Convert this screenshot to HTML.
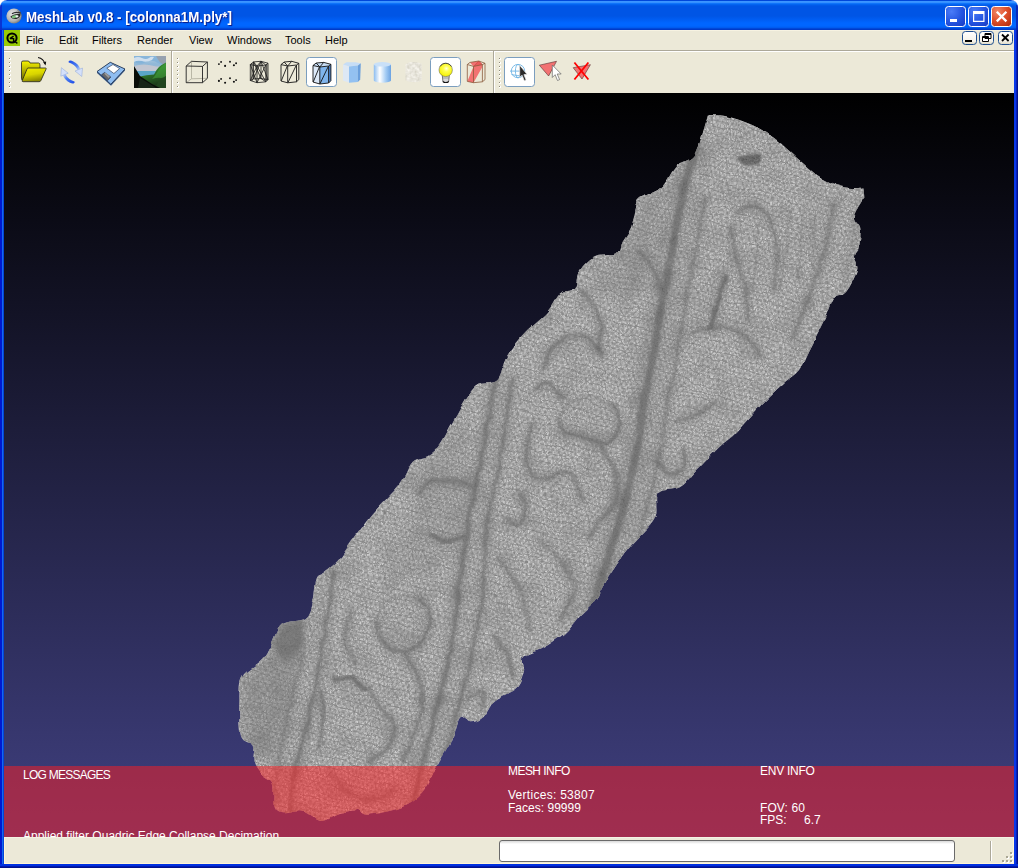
<!DOCTYPE html>
<html><head><meta charset="utf-8"><title>MeshLab v0.8 - [colonna1M.ply*]</title>
<style>
html,body{margin:0;padding:0;}
body{width:1018px;height:868px;overflow:hidden;position:relative;background:#fff;font-family:"Liberation Sans",sans-serif;}
#win{position:absolute;left:0;top:0;width:1018px;height:868px;overflow:hidden;background:#0b45e0;border-radius:7px 7px 0 0;}
#corners{position:absolute;left:0;top:0;width:1018px;height:8px;background:#fff;}
#title{position:absolute;left:0;top:0;width:1018px;height:30px;border-radius:7px 7px 0 0;
background:linear-gradient(to bottom,#0047da 0,#0047da 1px,#3b95ff 1.5px,#3590ff 2.5px,#0f74fa 3.5px,#0364f0 4.5px,#0055e5 6px,#0055e5 16px,#005cf0 19px,#0066ff 23px,#0066ff 26px,#005cf0 27.5px,#0048d8 28.5px,#0033c0 30px);}
#title .txt{position:absolute;left:26px;top:9px;transform:scaleX(0.952);transform-origin:0 0;font-size:14px;font-weight:bold;color:#fff;white-space:nowrap;line-height:16px;text-shadow:1px 1px 1px #0a1883;}
#bl{position:absolute;left:0;top:30px;width:4px;height:838px;background:linear-gradient(to right,#0019cf 0,#0019cf 2px,#1468f0 2px,#1468f0 3px,#0444d8 3px);}
#br{position:absolute;left:1014px;top:30px;width:4px;height:838px;background:linear-gradient(to right,#0838e8 0,#0838e8 2px,#0820b8 2px,#0820b8 3px,#00108c 3px);}
#bb{position:absolute;left:0;top:864px;width:1018px;height:4px;background:linear-gradient(to bottom,#0030e0 0,#0030e0 2px,#0018b0 2px,#0018b0 3px,#00108c 3px);}
#menu{position:absolute;left:4px;top:30px;width:1010px;height:20px;background:#ece9d8;box-shadow:inset 0 1px 0 #f7f3e2;font-size:11px;color:#000;}
#menu span{position:absolute;top:4px;line-height:13px;white-space:nowrap;}
#tb{position:absolute;left:4px;top:50px;width:1010px;height:43px;background:#ece9d8;border-top:1px solid #aca899;box-sizing:border-box;}
#tb:before{content:"";position:absolute;left:0;top:0;width:100%;height:1px;background:#fff;}
#gl{position:absolute;left:4px;top:93px;width:1010px;height:744px;background:linear-gradient(to bottom,#000 0,#404080 100%);overflow:hidden;}
#log{position:absolute;left:0;top:673px;width:1010px;height:71px;background:rgba(255,28,32,0.5);}
.gt{position:absolute;color:#fff;font-size:12px;line-height:14px;white-space:pre;}
#sb{position:absolute;left:4px;top:837px;width:1010px;height:27px;background:#ece9d8;box-sizing:border-box;border-left:1px solid #fff5d6;border-right:1px solid #fff5d6;border-bottom:1px solid #fff5d6;border-top:1px solid #f3f3e4;}
#sb .box{position:absolute;left:494px;top:2px;width:454px;height:20px;border:1px solid #6a6a6a;border-radius:3px;background:linear-gradient(to bottom,#d8d8d8 0,#fff 3px);}
#sb .sep{position:absolute;left:985px;top:3px;width:1px;height:20px;background:#aca899;border-right:1px solid #fff;}
#sb .grip{position:absolute;left:0;top:0;}
</style></head><body>
<div id="win">
<div id="corners"></div>
<div id="title"><span class="txt">MeshLab v0.8 - [colonna1M.ply*]</span></div>
<div id="menu">
<span style="left:22px">File</span><span style="left:55px">Edit</span><span style="left:88px">Filters</span><span style="left:133px">Render</span><span style="left:185px">View</span><span style="left:223px">Windows</span><span style="left:281px">Tools</span><span style="left:321px">Help</span>
</div>
<div id="tb"></div>
<div id="gl">
<svg id="mesh" width="1010" height="744" viewBox="0 0 1010 744" style="position:absolute;left:0;top:0">
<defs><clipPath id="mclip"><path d="M703.8,22.7 C703.8,22.7 712.7,21.4 719.5,22.7 C726.3,24 736.3,26.9 744.7,30.6 C753.1,34.3 761.4,38.7 769.8,44.7 C778.2,50.7 787.6,60.4 795,66.7 C802.4,73 807.6,78.3 813.9,82.5 C820.2,86.7 826.9,89.8 832.7,91.9 C838.5,94 844,94.6 848.5,95 C853,95.4 859.5,94.4 859.5,94.4 C859.5,94.4 860.4,104.5 860.4,104.5 C860.4,104.5 850.7,118.2 850,123.4 C849.3,128.6 855.5,130.7 856.3,135.9 C857.1,141.1 855.8,150.1 854.7,154.8 C853.7,159.5 850.2,160.5 850,164.2 C849.8,167.9 854.5,171 853.2,176.8 C851.9,182.6 846.1,194.1 842.2,198.8 C838.3,203.5 833.3,200.4 829.6,205.1 C825.9,209.8 824.4,218.1 820.2,227 C816,235.9 808.6,250.3 804.4,258.6 C800.2,266.9 798.9,271.9 795,277 C791.1,282.1 786,284.5 781,289 C776,293.5 770.7,298.3 765,304 C759.3,309.7 752.8,316.7 747,323 C741.2,329.3 735.2,336.6 730,341.7 C724.8,346.8 722.4,347.3 716,353.4 C709.6,359.5 698.3,371.7 691.6,378.5 C684.9,385.3 682.2,390.5 675.9,394.2 C669.6,397.9 658.1,395.2 653.9,400.5 C649.7,405.8 654.9,417.3 650.7,425.7 C646.5,434.1 634.5,443.9 628.7,450.8 C622.9,457.7 620.6,460.5 616,467 C611.4,473.5 605.2,483 601,489.8 C596.8,496.6 595,502.1 590.8,507.6 C586.6,513.1 580.2,517.7 575.6,522.8 C571,527.9 567.1,533.8 562.9,538 C558.7,542.2 554.4,545 550.2,548 C546,551 542.6,553 537.6,555.7 C532.6,558.4 522.9,560.3 520,564 C517.1,567.7 521.1,573 520,578 C518.9,583 516.9,589.7 513.5,593.8 C510.1,597.9 503.5,600.1 499.5,602.6 C495.5,605.1 492.8,605.4 489.4,609 C486,612.6 483,620.8 479.2,624.2 C475.4,627.6 470.4,629.3 466.6,629.3 C462.8,629.3 459.4,621.7 456.4,624.2 C453.4,626.7 452.6,636.6 448.8,644.5 C445,652.4 437.1,664.8 433.5,671.4 C429.9,678 429.9,679.3 427.3,684 C424.7,688.7 422,695 417.8,699.7 C413.6,704.4 407.9,709.1 402.1,712.3 C396.3,715.4 389.8,717 383.2,718.6 C376.6,720.2 367.8,722 362.8,721.7 C357.8,721.4 355.4,717.5 353,717 C350.6,716.5 352,717.8 348.6,718.6 C345.2,719.4 338.1,720.1 332.9,721.7 C327.7,723.3 323,728.5 317.2,728 C311.4,727.5 304.9,719.9 298.3,718.6 C291.8,717.3 282.6,721.2 277.9,720.2 C273.2,719.2 271.6,717.3 270,712.3 C268.4,707.3 270.6,695.5 268.5,690.3 C266.4,685 260.5,684.5 257.4,680.8 C254.2,677.1 250.9,673 249.6,668.3 C248.3,663.6 251.7,656.7 249.6,652.5 C247.5,648.3 239.4,650.9 237,643 C234.6,635.1 235.1,615.3 235.4,605.4 C235.7,595.5 234.9,589.7 238.6,583.4 C242.3,577.1 252.7,572.9 257.4,567.6 C262.1,562.4 263.5,557.9 266.9,551.9 C270.3,545.9 272.1,536 277.9,531.5 C283.7,527 296.3,529.1 301.5,525.2 C306.7,521.3 307.5,514.5 309.3,507.9 C311.1,501.3 310.7,490.6 312.5,485.9 C314.3,481.2 316.6,482.8 320.3,479.6 C324,476.5 330.3,471.6 334.5,467 C338.7,462.4 339.6,459.7 345.3,452 C351,444.3 360.4,430.8 368.9,420.6 C377.3,410.4 389.4,399.6 396,391 C402.6,382.4 403.9,373.7 408.6,369 C413.3,364.3 419.6,365.9 424.3,362.8 C429,359.7 432.2,357 436.9,350.2 C441.6,343.4 446.8,331.3 452.6,321.9 C458.4,312.5 464.7,299.4 471.5,293.6 C478.3,287.8 488.3,292.5 493.5,287.3 C498.7,282.1 498.2,270.3 502.9,262.2 C507.6,254.1 515.1,245.8 521.8,238.6 C528.5,231.4 537.3,225.4 543,219 C548.7,212.6 551.5,204.3 556,200.4 C560.5,196.5 567.1,199.1 570.2,195.7 C573.4,192.3 571.5,185.2 574.9,180 C578.3,174.8 584.3,167.3 590.6,164.2 C596.9,161 607.9,163.7 612.6,161.1 C617.3,158.5 616.5,152.7 618.9,148.5 C621.3,144.3 625,140.1 626.8,135.9 C628.6,131.7 628.6,128.1 629.9,123.4 C631.2,118.7 631.7,111.5 634.6,107.6 C637.5,103.7 643,102.4 647.2,99.8 C651.4,97.2 655.6,96.4 659.8,91.9 C664,87.4 667.7,77.5 672.4,73 C677.1,68.5 684.3,68.3 688,65.2 C691.7,62.1 691.8,61.3 694.4,54.2 C697,47.1 703.8,22.7 703.8,22.7Z"/></clipPath>
<filter id="b1" x="-20%" y="-20%" width="140%" height="140%"><feGaussianBlur stdDeviation="1.2"/></filter>
<filter id="b3" x="-20%" y="-20%" width="140%" height="140%"><feGaussianBlur stdDeviation="3"/></filter>
<filter id="b6" x="-20%" y="-20%" width="140%" height="140%"><feGaussianBlur stdDeviation="6"/></filter>
<filter id="nz" x="0" y="0" width="100%" height="100%"><feTurbulence type="fractalNoise" baseFrequency="0.55" numOctaves="2" seed="7" result="n"/><feColorMatrix type="matrix" values="0 0 0 0 0  0 0 0 0 0  0 0 0 0 0  2.2 0 0 0 -0.85"/></filter>
<filter id="nz2" x="0" y="0" width="100%" height="100%"><feTurbulence type="fractalNoise" baseFrequency="0.045" numOctaves="3" seed="3" result="n"/><feColorMatrix type="matrix" values="0 0 0 0 0  0 0 0 0 0  0 0 0 0 0  0 2.4 0 0 -1.0"/></filter>
<filter id="nz3" x="0" y="0" width="100%" height="100%"><feTurbulence type="fractalNoise" baseFrequency="0.05" numOctaves="3" seed="11" result="n"/><feColorMatrix type="matrix" values="0 0 0 0 1  0 0 0 0 1  0 0 0 0 1  0 2.0 0 0 -0.95"/></filter>
<pattern id="wire" width="5" height="8.66" patternUnits="userSpaceOnUse" patternTransform="rotate(17)"><path d="M0,0H5M0,4.330H5M0,8.660H5M0,0L2.500,4.330L5,0M0,8.660L2.500,4.330L5,8.660" fill="none" stroke="#7a7a7a" stroke-width="0.9"/></pattern>
<pattern id="wire2" width="7" height="12.12" patternUnits="userSpaceOnUse" patternTransform="rotate(71)"><path d="M0,0H7M0,6.060H7M0,12.120H7M0,0L3.500,6.060L7,0M0,12.120L3.500,6.060L7,12.120" fill="none" stroke="#808080" stroke-width="0.9"/></pattern>
<filter id="disp" x="0" y="0" width="100%" height="100%"><feTurbulence type="fractalNoise" baseFrequency="0.035" numOctaves="2" seed="5" result="t"/><feDisplacementMap in="SourceGraphic" in2="t" scale="9" xChannelSelector="R" yChannelSelector="G"/></filter>
<filter id="rough" filterUnits="userSpaceOnUse" x="200" y="0" width="700" height="744"><feTurbulence type="fractalNoise" baseFrequency="0.07" numOctaves="2" seed="21" result="t"/><feDisplacementMap in="SourceGraphic" in2="t" scale="5" xChannelSelector="R" yChannelSelector="G"/></filter>
</defs>
<g filter="url(#rough)"><g clip-path="url(#mclip)">
<rect x="230" y="15" width="640" height="720" fill="#d6d6d6"/>
<path d="M240,587 C245.2,582 261.7,563.7 271,557 C280.3,550.3 292.5,542 296,547 C299.5,552 294.5,573.7 292,587 C289.5,600.3 285.3,613.7 281,627 C276.7,640.3 272.5,663.7 266,667 C259.5,670.3 246,650.3 242,647Z" fill="#8a8a8a" opacity="0.55" filter="url(#b6)"/>
<path d="M636,107 C640.2,105.3 657.7,90.3 661,97 C664.3,103.7 660.2,130.3 656,147 C651.8,163.7 643.5,187 636,197 C628.5,207 617.7,208.7 611,207 C604.3,205.3 594.3,197 596,187 C597.7,177 616.8,153.7 621,147Z" fill="#8c8c8c" opacity="0.35" filter="url(#b6)"/>
<path d="M416,377 C421,372 437.7,347 446,347 C454.3,347 466,360.3 466,377 C466,393.7 454.3,428.7 446,447 C437.7,465.3 424.3,483.7 416,487 C407.7,490.3 399.3,470.3 396,467Z" fill="#8c8c8c" opacity="0.3" filter="url(#b6)"/>
<path d="M716,37 C722.7,37.8 739.3,32.8 756,42 C772.7,51.2 801,81.2 816,92 C831,102.8 844.3,94.5 846,107 C847.7,119.5 836,158.7 826,167 C816,175.3 797.7,167 786,157 C774.3,147 766,120.3 756,107 C746,93.7 731,82 726,77Z" fill="#d0d0d0" opacity="0.35" filter="url(#b6)"/>
<path d="M693,55 C692.2,57 690.4,59.3 688,67 C685.6,74.7 681.5,88.8 678.6,101.3 C675.7,113.8 673.4,128.6 670.8,142.2 C668.2,155.8 665.6,168.9 663,183 C660.4,197.1 657.6,211.3 655,227 C652.4,242.7 649.5,264.8 647.2,277 C644.9,289.2 643.9,285.7 641.3,300 C638.7,314.3 636,341.9 631.8,362.8 C627.6,383.8 621.8,404.7 616,425.7 C610.2,446.7 601.5,474.1 597,488.6 C592.5,503.2 590.3,508.9 589,513" fill="none" stroke="#6a6a6a" stroke-width="25.6" stroke-linecap="round" opacity="0.28" filter="url(#b3)"/>
<path d="M693,55 C692.2,57 690.4,59.3 688,67 C685.6,74.7 681.5,88.8 678.6,101.3 C675.7,113.8 673.4,128.6 670.8,142.2 C668.2,155.8 665.6,168.9 663,183 C660.4,197.1 657.6,211.3 655,227 C652.4,242.7 649.5,264.8 647.2,277 C644.9,289.2 643.9,285.7 641.3,300 C638.7,314.3 636,341.9 631.8,362.8 C627.6,383.8 621.8,404.7 616,425.7 C610.2,446.7 601.5,474.1 597,488.6 C592.5,503.2 590.3,508.9 589,513" fill="none" stroke="#6a6a6a" stroke-width="8" stroke-linecap="round" opacity="0.8" filter="url(#b1)"/>
<path d="M705,57 C704.2,59 702.4,61.3 700,69 C697.6,76.7 693.5,90.8 690.6,103.3 C687.7,115.8 685.4,130.6 682.8,144.2 C680.2,157.8 677.6,170.9 675,185 C672.4,199.1 669.6,213.3 667,229 C664.4,244.7 661.5,266.8 659.2,279 C656.9,291.2 655.9,287.7 653.3,302 C650.7,316.3 648,343.9 643.8,364.8 C639.6,385.8 633.8,406.7 628,427.7 C622.2,448.7 613.5,476.1 609,490.6 C604.5,505.2 602.3,510.9 601,515" fill="none" stroke="#c6c6c6" stroke-width="11" stroke-linecap="round" opacity="0.7" filter="url(#b3)"/>
<path d="M701.6,104.3 C700.3,111.1 696.4,131.6 693.8,145.2 C691.2,158.8 688.6,171.9 686,186 C683.4,200.1 680.6,214.3 678,230 C675.4,245.7 672.5,267.8 670.2,280 C667.9,292.2 666.9,288.7 664.3,303 C661.7,317.3 659,344.9 654.8,365.8 C650.6,386.8 644.8,407.7 639,428.7 C633.2,449.7 624.5,477.1 620,491.6 C615.5,506.2 613.3,511.9 612,516" fill="none" stroke="#6a6a6a" stroke-width="8.0" stroke-linecap="round" opacity="0.28" filter="url(#b3)"/>
<path d="M701.6,104.3 C700.3,111.1 696.4,131.6 693.8,145.2 C691.2,158.8 688.6,171.9 686,186 C683.4,200.1 680.6,214.3 678,230 C675.4,245.7 672.5,267.8 670.2,280 C667.9,292.2 666.9,288.7 664.3,303 C661.7,317.3 659,344.9 654.8,365.8 C650.6,386.8 644.8,407.7 639,428.7 C633.2,449.7 624.5,477.1 620,491.6 C615.5,506.2 613.3,511.9 612,516" fill="none" stroke="#6f6f6f" stroke-width="2.5" stroke-linecap="round" opacity="0.55" filter="url(#b1)"/>
<path d="M493,291 C492.6,291.4 492.8,281.6 490.3,293.6 C487.8,305.6 482,340.8 477.8,362.8 C473.6,384.8 468.9,404.7 465.2,425.7 C461.5,446.7 458.9,466.1 455.7,488.6 C452.5,511.2 450.2,538.4 446,561 C441.8,583.6 435.6,603 430.4,624 C425.2,645 418.8,671.5 414.7,687 C410.6,702.5 407.4,712 406,717" fill="none" stroke="#6a6a6a" stroke-width="14.4" stroke-linecap="round" opacity="0.28" filter="url(#b3)"/>
<path d="M493,291 C492.6,291.4 492.8,281.6 490.3,293.6 C487.8,305.6 482,340.8 477.8,362.8 C473.6,384.8 468.9,404.7 465.2,425.7 C461.5,446.7 458.9,466.1 455.7,488.6 C452.5,511.2 450.2,538.4 446,561 C441.8,583.6 435.6,603 430.4,624 C425.2,645 418.8,671.5 414.7,687 C410.6,702.5 407.4,712 406,717" fill="none" stroke="#6f6f6f" stroke-width="4.5" stroke-linecap="round" opacity="0.75" filter="url(#b1)"/>
<path d="M508,287 C506.1,299.6 500.6,339.7 496.6,362.8 C492.6,385.9 487.1,401.7 484,425.7 C480.9,449.7 480.8,483.4 477.8,507 C474.8,530.5 470.5,547 466,567 C461.5,587 456,608.7 451,627 C446,645.3 438.5,668.7 436,677" fill="none" stroke="#6a6a6a" stroke-width="11.200000000000001" stroke-linecap="round" opacity="0.28" filter="url(#b3)"/>
<path d="M508,287 C506.1,299.6 500.6,339.7 496.6,362.8 C492.6,385.9 487.1,401.7 484,425.7 C480.9,449.7 480.8,483.4 477.8,507 C474.8,530.5 470.5,547 466,567 C461.5,587 456,608.7 451,627 C446,645.3 438.5,668.7 436,677" fill="none" stroke="#6f6f6f" stroke-width="3.5" stroke-linecap="round" opacity="0.65" filter="url(#b1)"/>
<path d="M499.1,290.3 C497.2,302.4 491.3,340.2 487.2,362.8 C483.1,385.4 478,403.2 474.6,425.7 C471.2,448.2 469.9,474.7 466.8,497.8 C463.6,520.8 460.3,542.7 456,564 C451.7,585.3 445.8,605.8 440.7,625.5 C435.6,645.2 427.9,672.6 425.4,682" fill="none" stroke="#c6c6c6" stroke-width="8" stroke-linecap="round" opacity="0.6" filter="url(#b3)"/>
<path d="M329.8,479.6 C327.7,493.2 321.2,536.9 317,561 C312.8,585.1 309.3,603 304.6,624 C299.9,645 292.1,671.2 289,687 C285.9,702.8 286.5,713.7 286,719" fill="none" stroke="#6a6a6a" stroke-width="11.200000000000001" stroke-linecap="round" opacity="0.28" filter="url(#b3)"/>
<path d="M329.8,479.6 C327.7,493.2 321.2,536.9 317,561 C312.8,585.1 309.3,603 304.6,624 C299.9,645 292.1,671.2 289,687 C285.9,702.8 286.5,713.7 286,719" fill="none" stroke="#6f6f6f" stroke-width="3.5" stroke-linecap="round" opacity="0.7" filter="url(#b1)"/>
<path d="M320.5,486 C318.1,498.5 311,538 306,561 C301,584 294.8,605.7 290.6,624 C286.4,642.3 283.1,656.3 281,671 C278.9,685.7 278.5,705.2 278,712" fill="none" stroke="#c4c4c4" stroke-width="8" stroke-linecap="round" opacity="0.6" filter="url(#b3)"/>
<path d="M299,561 C296.4,571.5 287.8,605.7 283.6,624 C279.4,642.3 276.1,656.3 274,671 C271.9,685.7 271.5,705.2 271,712" fill="none" stroke="#6a6a6a" stroke-width="8.0" stroke-linecap="round" opacity="0.28" filter="url(#b3)"/>
<path d="M299,561 C296.4,571.5 287.8,605.7 283.6,624 C279.4,642.3 276.1,656.3 274,671 C271.9,685.7 271.5,705.2 271,712" fill="none" stroke="#6f6f6f" stroke-width="2.5" stroke-linecap="round" opacity="0.5" filter="url(#b1)"/>
<path d="M275,531 C279,530.2 295.5,521.7 299,526 C302.5,530.3 299.5,550.5 296,557 C292.5,563.5 282.7,565.8 278,565 C273.3,564.2 269.7,554.2 268,552Z" fill="#6c6c6c" opacity="0.8" filter="url(#b3)"/>
<path d="M732,65 C734,64.3 739.8,61.5 744,61 C748.2,60.5 755,60.7 757,62 C759,63.3 758.7,67.2 756,69 C753.3,70.8 743.5,72.3 741,73Z" fill="#505050" opacity="0.9" filter="url(#b1)"/>
<path d="M721,183 C720,186.7 717.3,196.7 715,205 C712.7,213.3 708.3,228.3 707,233" fill="none" stroke="#6a6a6a" stroke-width="14.4" stroke-linecap="round" opacity="0.28" filter="url(#b3)"/>
<path d="M721,183 C720,186.7 717.3,196.7 715,205 C712.7,213.3 708.3,228.3 707,233" fill="none" stroke="#606060" stroke-width="4.5" stroke-linecap="round" opacity="0.85" filter="url(#b1)"/>
<path d="M634.6,158 C637.2,161.2 646.3,170.7 650,177 C653.7,183.3 655.5,192.6 656.6,195.7" fill="none" stroke="#6a6a6a" stroke-width="9.600000000000001" stroke-linecap="round" opacity="0.28" filter="url(#b3)"/>
<path d="M634.6,158 C637.2,161.2 646.3,170.7 650,177 C653.7,183.3 655.5,192.6 656.6,195.7" fill="none" stroke="#6f6f6f" stroke-width="3" stroke-linecap="round" opacity="0.7" filter="url(#b1)"/>
<path d="M575,195.7 C577,197.8 583.3,201.8 587,208 C590.7,214.2 595.8,224.6 597,233 C598.2,241.4 594.5,254.3 594,258.6" fill="none" stroke="#6a6a6a" stroke-width="9.600000000000001" stroke-linecap="round" opacity="0.28" filter="url(#b3)"/>
<path d="M575,195.7 C577,197.8 583.3,201.8 587,208 C590.7,214.2 595.8,224.6 597,233 C598.2,241.4 594.5,254.3 594,258.6" fill="none" stroke="#6f6f6f" stroke-width="3" stroke-linecap="round" opacity="0.65" filter="url(#b1)"/>
<path d="M732,120 C733.6,119 736.8,114.5 741.5,114 C746.2,113.5 755.7,112.8 760.4,117 C765.1,121.2 767.7,131.2 769.8,139 C771.9,146.8 773,154.6 773,164 C773,173.4 770.3,190.4 769.8,195.7" fill="none" stroke="#6a6a6a" stroke-width="9.600000000000001" stroke-linecap="round" opacity="0.28" filter="url(#b3)"/>
<path d="M732,120 C733.6,119 736.8,114.5 741.5,114 C746.2,113.5 755.7,112.8 760.4,117 C765.1,121.2 767.7,131.2 769.8,139 C771.9,146.8 773,154.6 773,164 C773,173.4 770.3,190.4 769.8,195.7" fill="none" stroke="#6f6f6f" stroke-width="3" stroke-linecap="round" opacity="0.6" filter="url(#b1)"/>
<path d="M727,132.8 C727.8,138 729.6,153.5 732,164 C734.4,174.5 739.4,185.2 741.5,195.7 C743.6,206.2 744.2,221.8 744.7,227" fill="none" stroke="#6a6a6a" stroke-width="9.600000000000001" stroke-linecap="round" opacity="0.28" filter="url(#b3)"/>
<path d="M727,132.8 C727.8,138 729.6,153.5 732,164 C734.4,174.5 739.4,185.2 741.5,195.7 C743.6,206.2 744.2,221.8 744.7,227" fill="none" stroke="#6f6f6f" stroke-width="3" stroke-linecap="round" opacity="0.6" filter="url(#b1)"/>
<path d="M829.6,110.8 C828.5,117.1 826.7,134.3 823,148.5 C819.3,162.7 813.3,179.4 807.6,195.7 C801.9,211.9 791.9,237.6 788.7,246" fill="none" stroke="#6a6a6a" stroke-width="11.200000000000001" stroke-linecap="round" opacity="0.28" filter="url(#b3)"/>
<path d="M829.6,110.8 C828.5,117.1 826.7,134.3 823,148.5 C819.3,162.7 813.3,179.4 807.6,195.7 C801.9,211.9 791.9,237.6 788.7,246" fill="none" stroke="#6f6f6f" stroke-width="3.5" stroke-linecap="round" opacity="0.55" filter="url(#b1)"/>
<path d="M688,239.7 C693.2,238.6 710,232.3 719.5,233.4 C729,234.4 738.5,240.8 744.7,246 C751,251.2 755,261.8 757,264.9" fill="none" stroke="#6a6a6a" stroke-width="9.600000000000001" stroke-linecap="round" opacity="0.28" filter="url(#b3)"/>
<path d="M688,239.7 C693.2,238.6 710,232.3 719.5,233.4 C729,234.4 738.5,240.8 744.7,246 C751,251.2 755,261.8 757,264.9" fill="none" stroke="#6f6f6f" stroke-width="3" stroke-linecap="round" opacity="0.6" filter="url(#b1)"/>
<path d="M786,119 C785.3,125.5 783.7,145 782,158 C780.3,171 777,190.5 776,197" fill="none" stroke="#6f6f6f" stroke-width="2" stroke-linecap="round" opacity="0.45" filter="url(#b1)"/>
<path d="M799,117 C798.7,122.8 798,140.3 797,152 C796,163.7 793.7,181.2 793,187" fill="none" stroke="#6f6f6f" stroke-width="2" stroke-linecap="round" opacity="0.45" filter="url(#b1)"/>
<path d="M811,122 C810.9,126.6 811,140.3 810.5,149.5 C810,158.7 808.4,172.4 808,177" fill="none" stroke="#6f6f6f" stroke-width="2" stroke-linecap="round" opacity="0.45" filter="url(#b1)"/>
<path d="M754,132 C753.7,137.4 753,153.7 752,164.5 C751,175.3 748.7,191.6 748,197" fill="none" stroke="#6f6f6f" stroke-width="2" stroke-linecap="round" opacity="0.45" filter="url(#b1)"/>
<path d="M854,107 C853,115.3 850.5,141.7 848,157 C845.5,172.3 840.5,192 839,199" fill="none" stroke="#8a8a8a" stroke-width="5" stroke-linecap="round" opacity="0.6" filter="url(#b3)"/>
<path d="M540.7,274.7 C541.8,271.6 542.8,261.1 547,255.9 C551.2,250.7 559.5,244.9 565.8,243.3 C572.1,241.7 579.5,243.2 584.7,246.4 C590,249.5 595.2,259.6 597.3,262.2" fill="none" stroke="#6a6a6a" stroke-width="9.600000000000001" stroke-linecap="round" opacity="0.28" filter="url(#b3)"/>
<path d="M540.7,274.7 C541.8,271.6 542.8,261.1 547,255.9 C551.2,250.7 559.5,244.9 565.8,243.3 C572.1,241.7 579.5,243.2 584.7,246.4 C590,249.5 595.2,259.6 597.3,262.2" fill="none" stroke="#6f6f6f" stroke-width="3" stroke-linecap="round" opacity="0.65" filter="url(#b1)"/>
<path d="M531,296.7 C533.1,295.7 539,288.9 543.8,290.5 C548.5,292.1 556.9,303.4 559.5,306" fill="none" stroke="#6a6a6a" stroke-width="9.600000000000001" stroke-linecap="round" opacity="0.28" filter="url(#b3)"/>
<path d="M531,296.7 C533.1,295.7 539,288.9 543.8,290.5 C548.5,292.1 556.9,303.4 559.5,306" fill="none" stroke="#6f6f6f" stroke-width="3" stroke-linecap="round" opacity="0.7" filter="url(#b1)"/>
<path d="M554.8,328 C556.1,325.4 557.7,316.4 562.7,312.5 C567.7,308.6 576.9,304.6 584.7,304.6 C592.6,304.6 604.6,308.1 609.8,312.5 C615,316.9 617,325.1 616,331.3 C615,337.6 609.8,347.9 603.5,350 C597.2,352.1 585.7,346.1 578.4,344 C571.1,341.9 562.6,338.7 559.5,337.6Z" fill="#cacaca" opacity="0.6" filter="url(#b3)"/>
<path d="M554.8,328 C555.6,329.6 555.6,334.9 559.5,337.6 C563.4,340.3 571.1,341.9 578.4,344 C585.7,346.1 597.2,352.1 603.5,350 C609.8,347.9 615,337.6 616,331.3 C617,325.1 610.8,315.6 609.8,312.5" fill="none" stroke="#6a6a6a" stroke-width="9.600000000000001" stroke-linecap="round" opacity="0.28" filter="url(#b3)"/>
<path d="M554.8,328 C555.6,329.6 555.6,334.9 559.5,337.6 C563.4,340.3 571.1,341.9 578.4,344 C585.7,346.1 597.2,352.1 603.5,350 C609.8,347.9 615,337.6 616,331.3 C617,325.1 610.8,315.6 609.8,312.5" fill="none" stroke="#6f6f6f" stroke-width="3" stroke-linecap="round" opacity="0.75" filter="url(#b1)"/>
<path d="M554.8,328 C556.1,325.4 557.7,316.4 562.7,312.5 C567.7,308.6 576.9,304.6 584.7,304.6 C592.6,304.6 605.6,311.2 609.8,312.5" fill="none" stroke="#6f6f6f" stroke-width="2" stroke-linecap="round" opacity="0.45" filter="url(#b1)"/>
<path d="M528,331 C527,336.3 521.3,353.8 521.8,362.8 C522.3,371.8 526.8,381.1 531,384.8 C535.2,388.5 542.2,385.9 547,384.8 C551.8,383.8 555.3,378 559.5,378.5 C563.7,379 568.9,383.3 572,388 C575.1,392.7 577.3,403.7 578.4,406.8" fill="none" stroke="#6a6a6a" stroke-width="9.600000000000001" stroke-linecap="round" opacity="0.28" filter="url(#b3)"/>
<path d="M528,331 C527,336.3 521.3,353.8 521.8,362.8 C522.3,371.8 526.8,381.1 531,384.8 C535.2,388.5 542.2,385.9 547,384.8 C551.8,383.8 555.3,378 559.5,378.5 C563.7,379 568.9,383.3 572,388 C575.1,392.7 577.3,403.7 578.4,406.8" fill="none" stroke="#6f6f6f" stroke-width="3" stroke-linecap="round" opacity="0.65" filter="url(#b1)"/>
<path d="M597.3,353.4 C599.4,357.1 607.2,366.5 609.8,375.4 C612.4,384.3 615.1,398.4 613,406.8 C610.9,415.2 602,419.4 597.3,425.7 C592.6,432 586.8,441.4 584.7,444.5" fill="none" stroke="#6a6a6a" stroke-width="11.200000000000001" stroke-linecap="round" opacity="0.28" filter="url(#b3)"/>
<path d="M597.3,353.4 C599.4,357.1 607.2,366.5 609.8,375.4 C612.4,384.3 615.1,398.4 613,406.8 C610.9,415.2 602,419.4 597.3,425.7 C592.6,432 586.8,441.4 584.7,444.5" fill="none" stroke="#6f6f6f" stroke-width="3.5" stroke-linecap="round" opacity="0.65" filter="url(#b1)"/>
<path d="M414.9,400.5 C417,398.4 421.1,390.1 427.4,388 C433.7,385.9 445.8,387 452.6,388 C459.4,389 465.7,393.2 468.3,394.2" fill="none" stroke="#6a6a6a" stroke-width="9.600000000000001" stroke-linecap="round" opacity="0.28" filter="url(#b3)"/>
<path d="M414.9,400.5 C417,398.4 421.1,390.1 427.4,388 C433.7,385.9 445.8,387 452.6,388 C459.4,389 465.7,393.2 468.3,394.2" fill="none" stroke="#6f6f6f" stroke-width="3" stroke-linecap="round" opacity="0.6" filter="url(#b1)"/>
<path d="M427.4,441.4 C430,442.4 437.9,447.2 443.2,447.7 C448.4,448.2 456.3,445 458.9,444.5" fill="none" stroke="#6a6a6a" stroke-width="11.200000000000001" stroke-linecap="round" opacity="0.28" filter="url(#b3)"/>
<path d="M427.4,441.4 C430,442.4 437.9,447.2 443.2,447.7 C448.4,448.2 456.3,445 458.9,444.5" fill="none" stroke="#5e5e5e" stroke-width="3.5" stroke-linecap="round" opacity="0.75" filter="url(#b1)"/>
<path d="M499.8,425.7 C502.4,426.8 511.8,434.1 515.5,432 C519.2,429.9 521.8,418.2 521.8,413 C521.8,407.8 516.5,402.6 515.5,400.5" fill="none" stroke="#6a6a6a" stroke-width="9.600000000000001" stroke-linecap="round" opacity="0.28" filter="url(#b3)"/>
<path d="M499.8,425.7 C502.4,426.8 511.8,434.1 515.5,432 C519.2,429.9 521.8,418.2 521.8,413 C521.8,407.8 516.5,402.6 515.5,400.5" fill="none" stroke="#6f6f6f" stroke-width="3" stroke-linecap="round" opacity="0.6" filter="url(#b1)"/>
<path d="M653.9,369 C656,371.1 662.2,380.5 666.4,381.6 C670.6,382.7 676.9,379.6 679,375.4 C681.1,371.2 679,359.6 679,356.5" fill="none" stroke="#6a6a6a" stroke-width="9.600000000000001" stroke-linecap="round" opacity="0.28" filter="url(#b3)"/>
<path d="M653.9,369 C656,371.1 662.2,380.5 666.4,381.6 C670.6,382.7 676.9,379.6 679,375.4 C681.1,371.2 679,359.6 679,356.5" fill="none" stroke="#6f6f6f" stroke-width="3" stroke-linecap="round" opacity="0.7" filter="url(#b1)"/>
<path d="M672.7,328 C675.9,327 685.3,325.1 691.6,322 C697.9,318.9 707.4,311.4 710.5,309.3" fill="none" stroke="#6a6a6a" stroke-width="9.600000000000001" stroke-linecap="round" opacity="0.28" filter="url(#b3)"/>
<path d="M672.7,328 C675.9,327 685.3,325.1 691.6,322 C697.9,318.9 707.4,311.4 710.5,309.3" fill="none" stroke="#6f6f6f" stroke-width="3" stroke-linecap="round" opacity="0.6" filter="url(#b1)"/>
<path d="M536,447 C539.3,450.3 550.2,458.7 556,467 C561.8,475.3 571,487 571,497 C571,507 558.5,522 556,527" fill="none" stroke="#6a6a6a" stroke-width="9.600000000000001" stroke-linecap="round" opacity="0.28" filter="url(#b3)"/>
<path d="M536,447 C539.3,450.3 550.2,458.7 556,467 C561.8,475.3 571,487 571,497 C571,507 558.5,522 556,527" fill="none" stroke="#6f6f6f" stroke-width="3" stroke-linecap="round" opacity="0.5" filter="url(#b1)"/>
<path d="M496,467 C499.3,472 511,485.3 516,497 C521,508.7 524.3,530.3 526,537" fill="none" stroke="#6a6a6a" stroke-width="9.600000000000001" stroke-linecap="round" opacity="0.28" filter="url(#b3)"/>
<path d="M496,467 C499.3,472 511,485.3 516,497 C521,508.7 524.3,530.3 526,537" fill="none" stroke="#6f6f6f" stroke-width="3" stroke-linecap="round" opacity="0.5" filter="url(#b1)"/>
<path d="M372,525 C374,522 378.3,510.3 384,507 C389.7,503.7 399.7,503 406,505 C412.3,507 419,513.3 422,519 C425,524.7 426.3,533 424,539 C421.7,545 414.7,552.3 408,555 C401.3,557.7 388,555 384,555Z" fill="#cacaca" opacity="0.6" filter="url(#b3)"/>
<path d="M372,529 C373.7,533 376.7,548.2 382,553 C387.3,557.8 397.3,559.7 404,558 C410.7,556.3 418.3,549.5 422,543 C425.7,536.5 427,525 426,519 C425,513 417.7,509 416,507" fill="none" stroke="#6a6a6a" stroke-width="9.600000000000001" stroke-linecap="round" opacity="0.28" filter="url(#b3)"/>
<path d="M372,529 C373.7,533 376.7,548.2 382,553 C387.3,557.8 397.3,559.7 404,558 C410.7,556.3 418.3,549.5 422,543 C425.7,536.5 427,525 426,519 C425,513 417.7,509 416,507" fill="none" stroke="#6f6f6f" stroke-width="3" stroke-linecap="round" opacity="0.75" filter="url(#b1)"/>
<path d="M372,529 C373.5,525.7 376.3,513.3 381,509 C385.7,504.7 394.2,503.3 400,503 C405.8,502.7 413.3,506.3 416,507" fill="none" stroke="#6f6f6f" stroke-width="2" stroke-linecap="round" opacity="0.45" filter="url(#b1)"/>
<path d="M329.8,586.5 C332.4,586.2 340.3,583.4 345.5,585 C350.7,586.6 358.6,594.2 361.2,596" fill="none" stroke="#6a6a6a" stroke-width="12.8" stroke-linecap="round" opacity="0.28" filter="url(#b3)"/>
<path d="M329.8,586.5 C332.4,586.2 340.3,583.4 345.5,585 C350.7,586.6 358.6,594.2 361.2,596" fill="none" stroke="#5c5c5c" stroke-width="4" stroke-linecap="round" opacity="0.8" filter="url(#b1)"/>
<path d="M364.4,596 C366.5,599.1 372.8,609 377,614.8 C381.2,620.5 388.5,623.7 389.5,630.5 C390.5,637.3 387.4,649.4 383.2,655.7 C379,662 367.5,666.2 364.4,668.3" fill="none" stroke="#6a6a6a" stroke-width="9.600000000000001" stroke-linecap="round" opacity="0.28" filter="url(#b3)"/>
<path d="M364.4,596 C366.5,599.1 372.8,609 377,614.8 C381.2,620.5 388.5,623.7 389.5,630.5 C390.5,637.3 387.4,649.4 383.2,655.7 C379,662 367.5,666.2 364.4,668.3" fill="none" stroke="#6f6f6f" stroke-width="3" stroke-linecap="round" opacity="0.6" filter="url(#b1)"/>
<path d="M402,561 C404.1,565.2 412.1,577.5 414.7,586.5 C417.3,595.5 418.9,605.4 417.8,614.8 C416.8,624.2 411.5,634.1 408.4,643 C405.3,651.9 400.6,664.1 399,668.3" fill="none" stroke="#6a6a6a" stroke-width="11.200000000000001" stroke-linecap="round" opacity="0.28" filter="url(#b3)"/>
<path d="M402,561 C404.1,565.2 412.1,577.5 414.7,586.5 C417.3,595.5 418.9,605.4 417.8,614.8 C416.8,624.2 411.5,634.1 408.4,643 C405.3,651.9 400.6,664.1 399,668.3" fill="none" stroke="#6f6f6f" stroke-width="3.5" stroke-linecap="round" opacity="0.6" filter="url(#b1)"/>
<path d="M317,599 C317.5,603.2 320.5,614.5 320,624 C319.5,633.5 315,650.4 314,655.7" fill="none" stroke="#6a6a6a" stroke-width="9.600000000000001" stroke-linecap="round" opacity="0.28" filter="url(#b3)"/>
<path d="M317,599 C317.5,603.2 320.5,614.5 320,624 C319.5,633.5 315,650.4 314,655.7" fill="none" stroke="#6f6f6f" stroke-width="3" stroke-linecap="round" opacity="0.55" filter="url(#b1)"/>
<path d="M490,542.5 C492.1,545.6 499.5,554.2 502.7,561 C505.9,567.8 507.9,579.3 509,583" fill="none" stroke="#6a6a6a" stroke-width="9.600000000000001" stroke-linecap="round" opacity="0.28" filter="url(#b3)"/>
<path d="M490,542.5 C492.1,545.6 499.5,554.2 502.7,561 C505.9,567.8 507.9,579.3 509,583" fill="none" stroke="#6f6f6f" stroke-width="3" stroke-linecap="round" opacity="0.65" filter="url(#b1)"/>
<path d="M465,605 C467.1,604 475.5,597.4 477.6,599 C479.7,600.6 477.6,612.2 477.6,614.8" fill="none" stroke="#6a6a6a" stroke-width="9.600000000000001" stroke-linecap="round" opacity="0.28" filter="url(#b3)"/>
<path d="M465,605 C467.1,604 475.5,597.4 477.6,599 C479.7,600.6 477.6,612.2 477.6,614.8" fill="none" stroke="#6f6f6f" stroke-width="3" stroke-linecap="round" opacity="0.6" filter="url(#b1)"/>
<path d="M346,517 C345.2,522 340.2,537.8 341,547 C341.8,556.2 349.3,567.8 351,572" fill="none" stroke="#6a6a6a" stroke-width="9.600000000000001" stroke-linecap="round" opacity="0.28" filter="url(#b3)"/>
<path d="M346,517 C345.2,522 340.2,537.8 341,547 C341.8,556.2 349.3,567.8 351,572" fill="none" stroke="#6f6f6f" stroke-width="3" stroke-linecap="round" opacity="0.5" filter="url(#b1)"/>
<path d="M326,677 C328.5,680.3 334.3,692 341,697 C347.7,702 357.7,707 366,707 C374.3,707 386.8,698.7 391,697" fill="none" stroke="#6a6a6a" stroke-width="9.600000000000001" stroke-linecap="round" opacity="0.28" filter="url(#b3)"/>
<path d="M326,677 C328.5,680.3 334.3,692 341,697 C347.7,702 357.7,707 366,707 C374.3,707 386.8,698.7 391,697" fill="none" stroke="#6f6f6f" stroke-width="3" stroke-linecap="round" opacity="0.45" filter="url(#b1)"/>
<rect x="230" y="15" width="640" height="720" filter="url(#nz2)" opacity="0.13"/>
<rect x="230" y="15" width="640" height="720" filter="url(#nz3)" opacity="0.16"/>
<g filter="url(#disp)"><rect x="200" y="0" width="700" height="744" fill="url(#wire)" opacity="0.8"/><rect x="200" y="0" width="700" height="744" fill="url(#wire2)" opacity="0.45"/></g>
<rect x="230" y="15" width="640" height="720" filter="url(#nz)" opacity="0.12"/>
</g></g>
</svg>
<div id="log"></div>
<div class="gt" style="left:19px;top:675px;letter-spacing:-0.75px">LOG MESSAGES</div>
<div class="gt" style="left:19px;top:736px;letter-spacing:0px">Applied filter Quadric Edge Collapse Decimation</div>
<div class="gt" style="left:504px;top:671px;letter-spacing:-0.55px">MESH INFO</div>
<div class="gt" style="left:504px;top:695px;letter-spacing:0.28px">Vertices: 53807</div>
<div class="gt" style="left:504px;top:708px;letter-spacing:0.02px">Faces: 99999</div>
<div class="gt" style="left:756px;top:671px;letter-spacing:-0.27px">ENV INFO</div>
<div class="gt" style="left:756px;top:708px;letter-spacing:0.1px">FOV: 60</div>
<div class="gt" style="left:756px;top:720px;">FPS:</div>
<div class="gt" style="left:800px;top:720px;">6.7</div>

</div>
<div id="sb"><div class="box"></div><div class="sep"></div>
<svg class="grip" width="1010" height="27" viewBox="4 837 1010 27" style="left:-1px;top:-1px"><g fill="#fff"><rect x="1011" y="853" width="2" height="2"/><rect x="1007" y="857" width="2" height="2"/><rect x="1011" y="857" width="2" height="2"/><rect x="1003" y="861" width="2" height="2"/><rect x="1007" y="861" width="2" height="2"/><rect x="1011" y="861" width="2" height="2"/></g><g fill="#a9a693"><rect x="1010" y="852" width="2" height="2"/><rect x="1006" y="856" width="2" height="2"/><rect x="1010" y="856" width="2" height="2"/><rect x="1002" y="860" width="2" height="2"/><rect x="1006" y="860" width="2" height="2"/><rect x="1010" y="860" width="2" height="2"/></g></svg></div>
<svg id="chrome" width="1018" height="93" viewBox="0 0 1018 93" style="position:absolute;left:0;top:0">
<defs>
<radialGradient id="gBtn" cx="0.3" cy="0.25" r="0.9"><stop offset="0" stop-color="#4a7cf8"/><stop offset="0.6" stop-color="#2454e0"/><stop offset="1" stop-color="#1a3fc8"/></radialGradient>
<radialGradient id="gCls" cx="0.3" cy="0.25" r="0.9"><stop offset="0" stop-color="#f08868"/><stop offset="0.5" stop-color="#e0512c"/><stop offset="1" stop-color="#b83010"/></radialGradient>
<linearGradient id="gMdi" x1="0" y1="0" x2="0" y2="1"><stop offset="0" stop-color="#ffffff"/><stop offset="0.7" stop-color="#f6f4ec"/><stop offset="1" stop-color="#dcd8c4"/></linearGradient>
<radialGradient id="gEye" cx="0.4" cy="0.35" r="0.7"><stop offset="0" stop-color="#e8e8e8"/><stop offset="0.7" stop-color="#b0b0b0"/><stop offset="1" stop-color="#707070"/></radialGradient>
<linearGradient id="gFold" x1="0" y1="0" x2="0.3" y2="1"><stop offset="0" stop-color="#f4f000"/><stop offset="0.55" stop-color="#d8d400"/><stop offset="1" stop-color="#8c8800"/></linearGradient>
<linearGradient id="gFoldB" x1="0" y1="0" x2="0" y2="1"><stop offset="0" stop-color="#f8f400"/><stop offset="1" stop-color="#6c6800"/></linearGradient>
<linearGradient id="gCyl" x1="0" y1="0" x2="1" y2="0"><stop offset="0" stop-color="#8bbcf0"/><stop offset="0.35" stop-color="#ffffff"/><stop offset="0.7" stop-color="#a4ccf4"/><stop offset="1" stop-color="#6aa2e2"/></linearGradient>
<radialGradient id="gBulb" cx="0.55" cy="0.4" r="0.6"><stop offset="0" stop-color="#ffffe0"/><stop offset="0.35" stop-color="#ffff50"/><stop offset="1" stop-color="#f4f000"/></radialGradient>
<linearGradient id="gArrA" x1="0" y1="0" x2="1" y2="1"><stop offset="0" stop-color="#1848e8"/><stop offset="0.6" stop-color="#5080f0"/><stop offset="1" stop-color="#d8e4fc"/></linearGradient>
<linearGradient id="gArrB" x1="1" y1="1" x2="0" y2="0"><stop offset="0" stop-color="#1848e8"/><stop offset="0.6" stop-color="#5080f0"/><stop offset="1" stop-color="#d8e4fc"/></linearGradient>
<linearGradient id="gSky" x1="0" y1="0" x2="0" y2="1"><stop offset="0" stop-color="#b8cee0"/><stop offset="0.25" stop-color="#8fb8d8"/><stop offset="0.7" stop-color="#c4c4cc"/><stop offset="1" stop-color="#5a9cb8"/></linearGradient>
<linearGradient id="gHill" x1="0" y1="0" x2="0.4" y2="1"><stop offset="0" stop-color="#3c9c34"/><stop offset="0.5" stop-color="#2f7a2c"/><stop offset="1" stop-color="#1c3818"/></linearGradient>
</defs>
<!-- app icon -->
<circle cx="14" cy="16" r="7.6" fill="url(#gEye)"/>
<path d="M16.500,9.300A7.600,7.600 0 0 1 21.500,17.500Q20.500,14.500 16.500,9.300z" fill="#6a6a6a" opacity="0.7"/>
<path d="M12,13.800Q15.500,11.300 20.800,13.200" fill="none" stroke="#2e2e2e" stroke-width="1.3"/>
<path d="M10.300,16.800Q13.500,13.300 20.300,14Q20.600,17.600 16.600,18.900Q12.600,19.700 10.300,16.800Z" fill="#262626"/>
<ellipse cx="14.600" cy="16.600" rx="2.900" ry="1.500" fill="#7cc07c" transform="rotate(-12 14.600 16.600)"/>
<ellipse cx="17" cy="16.300" rx="1.500" ry="1.100" fill="#eef4ee" transform="rotate(-12 17 16.300)"/>
<rect x="0" y="5" width="2" height="25" fill="#0a2ccc" opacity="0.85"/><rect x="1016" y="5" width="2" height="25" fill="#0a22b4" opacity="0.85"/>
<!-- caption buttons -->
<rect x="945.5" y="6.5" width="20" height="20" rx="3" fill="url(#gBtn)" stroke="#fff"/>
<rect x="950" y="19" width="7" height="3" fill="#fff"/>
<rect x="968.5" y="6.5" width="20" height="20" rx="3" fill="url(#gBtn)" stroke="#fff"/>
<path d="M973,11h11.5v11h-11.5z M974.2,14v6.8h9.1v-6.8z" fill="#fff" fill-rule="evenodd"/>
<rect x="991.5" y="6.5" width="20" height="20" rx="3" fill="url(#gCls)" stroke="#fff"/>
<path d="M996.8,11.8L1006.4,21.4M1006.4,11.8L996.8,21.4" stroke="#fff" stroke-width="2.3"/>
<!-- Qt menu icon -->
<rect x="4" y="30" width="16" height="16" fill="#99cb05"/>
<circle cx="12" cy="38" r="4.6" fill="none" stroke="#000" stroke-width="2"/>
<path d="M9.8,38.6L13.6,36.2M10,38.6h3.6v3.6M14,41l3.4,2.4" stroke="#000" stroke-width="1.4" fill="none"/>
<!-- MDI buttons -->
<rect x="962.5" y="31.5" width="14" height="13" rx="3" fill="url(#gMdi)" stroke="#1f4f8f"/>
<rect x="965" y="40" width="7" height="2" fill="#000"/>
<rect x="979.5" y="31.5" width="14" height="13" rx="3" fill="url(#gMdi)" stroke="#1f4f8f"/>
<path d="M985,33.5h6v5h-6z M985,34.5h6 M982.5,36.5h6v5h-6z M982.5,37.5h6" fill="#fff" stroke="#000" stroke-width="1"/>
<rect x="998.5" y="31.5" width="14" height="13" rx="3" fill="url(#gMdi)" stroke="#1f4f8f"/>
<path d="M1002,34.5L1008.6,41M1008.6,34.5L1002,41" stroke="#000" stroke-width="1.8"/>
<!-- toolbar separators and handles -->
<rect x="171" y="50" width="1" height="43" fill="#aca899"/><rect x="172" y="51" width="1" height="42" fill="#fff"/>
<rect x="493" y="50" width="1" height="43" fill="#aca899"/><rect x="494" y="51" width="1" height="42" fill="#fff"/>
<rect x="9" y="58" width="2" height="2" fill="#fff"/><rect x="9" y="58" width="1" height="1" fill="#8e8a78"/><rect x="9" y="62" width="2" height="2" fill="#fff"/><rect x="9" y="62" width="1" height="1" fill="#8e8a78"/><rect x="9" y="66" width="2" height="2" fill="#fff"/><rect x="9" y="66" width="1" height="1" fill="#8e8a78"/><rect x="9" y="70" width="2" height="2" fill="#fff"/><rect x="9" y="70" width="1" height="1" fill="#8e8a78"/><rect x="9" y="74" width="2" height="2" fill="#fff"/><rect x="9" y="74" width="1" height="1" fill="#8e8a78"/><rect x="9" y="78" width="2" height="2" fill="#fff"/><rect x="9" y="78" width="1" height="1" fill="#8e8a78"/><rect x="9" y="82" width="2" height="2" fill="#fff"/><rect x="9" y="82" width="1" height="1" fill="#8e8a78"/><rect x="9" y="86" width="2" height="2" fill="#fff"/><rect x="9" y="86" width="1" height="1" fill="#8e8a78"/><rect x="177" y="58" width="2" height="2" fill="#fff"/><rect x="177" y="58" width="1" height="1" fill="#8e8a78"/><rect x="177" y="62" width="2" height="2" fill="#fff"/><rect x="177" y="62" width="1" height="1" fill="#8e8a78"/><rect x="177" y="66" width="2" height="2" fill="#fff"/><rect x="177" y="66" width="1" height="1" fill="#8e8a78"/><rect x="177" y="70" width="2" height="2" fill="#fff"/><rect x="177" y="70" width="1" height="1" fill="#8e8a78"/><rect x="177" y="74" width="2" height="2" fill="#fff"/><rect x="177" y="74" width="1" height="1" fill="#8e8a78"/><rect x="177" y="78" width="2" height="2" fill="#fff"/><rect x="177" y="78" width="1" height="1" fill="#8e8a78"/><rect x="177" y="82" width="2" height="2" fill="#fff"/><rect x="177" y="82" width="1" height="1" fill="#8e8a78"/><rect x="177" y="86" width="2" height="2" fill="#fff"/><rect x="177" y="86" width="1" height="1" fill="#8e8a78"/><rect x="499" y="58" width="2" height="2" fill="#fff"/><rect x="499" y="58" width="1" height="1" fill="#8e8a78"/><rect x="499" y="62" width="2" height="2" fill="#fff"/><rect x="499" y="62" width="1" height="1" fill="#8e8a78"/><rect x="499" y="66" width="2" height="2" fill="#fff"/><rect x="499" y="66" width="1" height="1" fill="#8e8a78"/><rect x="499" y="70" width="2" height="2" fill="#fff"/><rect x="499" y="70" width="1" height="1" fill="#8e8a78"/><rect x="499" y="74" width="2" height="2" fill="#fff"/><rect x="499" y="74" width="1" height="1" fill="#8e8a78"/><rect x="499" y="78" width="2" height="2" fill="#fff"/><rect x="499" y="78" width="1" height="1" fill="#8e8a78"/><rect x="499" y="82" width="2" height="2" fill="#fff"/><rect x="499" y="82" width="1" height="1" fill="#8e8a78"/><rect x="499" y="86" width="2" height="2" fill="#fff"/><rect x="499" y="86" width="1" height="1" fill="#8e8a78"/>
<!-- open folder -->
<path d="M21.5,62.5 q0,-1.5 1.5,-1.5 h5 q1.5,0 2,2 h8.5 q1.5,0 1.5,2 v4 h-12 l-5,11 h-0.5 q-1,0 -1,-1.5z" fill="url(#gFoldB)" stroke="#222" stroke-width="0.8"/>
<path d="M28,68 h17.5 q1,0 0.6,1 l-5.2,11.5 q-0.5,1.2 -1.8,1.2 h-16 q-1.4,0 -0.8,-1.4 l4.6,-11 q0.4,-1.3 1.1,-1.3z" fill="url(#gFold)" stroke="#222" stroke-width="0.8"/>
<path d="M38,57.5 q5.5,1 7,6.5" fill="none" stroke="#111" stroke-width="1.1"/><path d="M43.2,62.2 l2.4,3.2 l0.6,-4z" fill="#111"/>
<!-- reload -->
<path d="M69.300,60.800 q1.500,-0.600 4,0.600 q5.500,2.600 7.200,8.200 l-2.600,1 q-1.800,-4.600 -6.200,-6.800 q-1.800,-0.800 -3,-1.200 q-0.600,-1 0.600,-1.800z" fill="url(#gArrA)"/>
<path d="M75,71 L82.500,68 L81.800,76.500z" fill="#d4e0fa" stroke="#8ca4d8" stroke-width="0.5"/>
<path d="M73.900,83.300 q-1.500,0.600 -4,-0.600 q-5.500,-2.600 -7.200,-8.200 l2.600,-1 q1.800,4.600 6.200,6.800 q1.800,0.800 3,1.200 q0.600,1 -0.600,1.800z" fill="url(#gArrB)"/>
<path d="M68.200,73.200 L60.800,76.200 L61.400,67.700z" fill="#d4e0fa" stroke="#8ca4d8" stroke-width="0.5"/>
<!-- save floppy -->
<path d="M97,71.500 L110.300,62.300 L125,69 L125,70.500 L111,85.800 L97,73z" fill="#3a5a88"/>
<path d="M97,71.500 L110.300,62.300 L125,69 L110.800,84.300z" fill="#8fbdf0" stroke="#1c2c48" stroke-width="0.8"/>
<path d="M106.800,68.200 L113,64.500 L119.600,68.600 L113.900,73.500z" fill="#fff" stroke="#1c2c48" stroke-width="0.6"/>
<path d="M101.500,74.800 L104.600,72.500 L110.800,77 L107.700,80.500z" fill="#666" stroke="#1c2c48" stroke-width="0.6"/>
<path d="M104,73.500 L106,72.800 L110,76.500 L108.500,78z" fill="#999"/>
<!-- snapshot -->
<rect x="134" y="56" width="32" height="32" fill="url(#gSky)"/>
<path d="M134,56 h32 v8 q-4,1 -8,-1 q-6,-4 -12,-1 q-6,3 -12,0z" fill="#7eb0d8" opacity="0.8"/>
<path d="M134,58 q4,-2 8,0 q4,2 7,0 q2,-2 5,-1 l-2,3 q-6,3 -10,1 q-5,-1 -8,1z" fill="#e8eef4" opacity="0.75"/>
<path d="M156,56 h10 v9 q-5,-1 -7,-4 q-2,-3 -3,-5z" fill="#9a9ca4" opacity="0.8"/>
<path d="M134,66 q10,-3 20,0 q4,1 8,0 v6 h-28z" fill="#c8c8d0" opacity="0.85"/>
<path d="M134,71 h22 v5 h-22z" fill="#5aa6c8"/>
<path d="M166,62.500 q-4,2 -7,4.500 q-3,3 -5,7.500 q-8,0.500 -14,2 L134,88 H166z" fill="url(#gHill)"/>
<path d="M166,63 q-5,3 -8,8 q-3,5 -6,8 q6,-2 9,-1 q3,0 5,-2z" fill="#46a83c" opacity="0.55"/>
<path d="M166,76 q-6,3 -9,8 l-2,4 h11z" fill="#234a20" opacity="0.75"/>
<path d="M134,66 L140,76 L152,84 L160,88 H134z" fill="#0a0e08"/>
<path d="M140,78 L150,84 L156,88 H138z" fill="#1c2c1c" opacity="0.8"/>
<!-- bbox cube -->
<g fill="none" stroke-width="0.9">
<path d="M191.500,61.300V78.800L207.400,78.300M191.500,78.800L186.200,82.700" stroke="#b4b1a0"/>
<path d="M186.200,66L202.500,66.400V82.700H186.200z M186.200,66L191.500,61.300L207.400,62L202.500,66.400 M207.400,62V78.300L202.500,82.700" stroke="#222"/>
</g>
<!-- points -->
<g fill="#111"><circle cx="218.900" cy="64.100" r="0.950"/><circle cx="221.100" cy="61.900" r="0.950"/><circle cx="225.100" cy="65.900" r="1.050"/><circle cx="230" cy="61.700" r="0.950"/><circle cx="233.900" cy="65.200" r="1.050"/><circle cx="236.100" cy="63.300" r="0.950"/>
<circle cx="218.900" cy="80.900" r="1.050"/><circle cx="221.100" cy="78.900" r="0.950"/><circle cx="225.100" cy="82.700" r="1.050"/><circle cx="230" cy="78.300" r="0.950"/><circle cx="233.900" cy="81.800" r="1.050"/><circle cx="236.100" cy="80.100" r="0.950"/></g>
<!-- wireframe prism -->
<g fill="none" stroke="#1a1a1a" stroke-width="0.8">
<path d="M250.300,64.500L253.500,61.900L261,61.300L268,63.200L265.800,65L257,66z M250.300,64.500V80.500L257,82.700L265.800,81.800L268,79.600V63.200 M257,66V82.700 M265.800,65V81.800"/>
<path d="M253.500,61.900V79L250.300,80.500M253.500,79L261,78.500L268,79.600M261,61.300V78.500M250.300,64.500L257,82.700M257,66L265.800,81.800M253.500,61.900L261,78.500M261,61.300L253.500,79M257,66L250.300,80.500M265.800,65L257,82.700M261,78.500L265.800,81.800M253.500,61.900L257,66L261,61.300L265.800,65M261,61.300L268,79.600M252,63V81M266.800,64V80.800"/>
</g>
<!-- hidden lines prism -->
<g fill="none" stroke="#1a1a1a" stroke-width="0.9">
<path d="M281,64.600L284.200,62L291.700,61.300L298.800,63.300L296.500,65L287.700,66z M281,64.600V81L287.700,82.800L296.500,81.800L298.800,79.600V63.300 M287.700,66V82.800 M296.500,65V81.800 M287.200,66.200L281.300,80.800 M296,65.800L288,82.500 M284.200,62L287.700,66L291.700,61.300"/>
</g>
<!-- flat lines (checked) -->
<rect x="306.500" y="57.500" width="30" height="29" rx="3" fill="#fff" stroke="#7b9ebf"/>
<path d="M313,65.500L316.200,63L323.700,62.400L330.900,64.300L328.600,66L319.800,67z" fill="#c9def5"/>
<path d="M313,65.500L319.800,67V84L313,82z" fill="#dce9f8"/>
<path d="M319.800,67L328.600,66V83L319.800,84z" fill="#7fb4ec"/>
<path d="M328.600,66L330.900,64.300V80.700L328.600,83z" fill="#4a80c8"/>
<g fill="none" stroke="#111" stroke-width="0.9"><path d="M313,65.500L316.200,63L323.700,62.400L330.900,64.300L328.600,66L319.800,67z M313,65.500V82L319.800,84L328.600,83L330.900,80.700V64.300 M319.800,67V84 M328.600,66V83 M319.300,67.200L313.300,81.800 M328.100,66.800L320.100,83.600 M316.200,63L319.800,67L323.700,62.400"/></g>
<!-- flat prism -->
<path d="M343,64.600L346.500,62.200L355.500,62.200L360.800,63.300L357.900,65.500L349,66.400z" fill="#c6ddf6"/>
<path d="M343,64.600L349,66.400V82.800L343,80.500z" fill="#dde8f5"/>
<path d="M349,66.400L357.900,65.500V81.900L349,82.800z" fill="#93c1f1"/>
<path d="M357.900,65.500L360.800,63.300L360.200,79.600L357.900,81.900z" fill="#6a9fdc"/>
<!-- smooth cylinder -->
<path d="M373.800,64.500V80.500a8.600,2.200 0 0 0 17.200,0V64.500z" fill="url(#gCyl)"/>
<ellipse cx="382.400" cy="64.300" rx="8.600" ry="2.300" fill="#c9e0f8"/>
<!-- texture disabled -->
<filter id="texf" x="0" y="0" width="100%" height="100%"><feTurbulence type="fractalNoise" baseFrequency="0.28" numOctaves="2" seed="4" result="n"/><feColorMatrix in="n" type="matrix" values="0.5 0 0 0 0.56  0.5 0 0 0 0.54  0.55 0 0 0 0.45  0 0 0 0 1" result="c"/><feComposite in="c" in2="SourceAlpha" operator="in"/></filter>
<path d="M405.500,64.200q4,-2.400 8,-2.200q5,0 8.300,1.800V80.200q-3,2.200 -8,2.100q-5,0 -8.300,-2z" fill="#e0dccb" filter="url(#texf)" opacity="0.9"/>
<!-- light (checked) -->
<rect x="430.500" y="57.500" width="30" height="29" rx="3" fill="#fff" stroke="#7b9ebf"/>
<path d="M442.300,75.500h7l-0.600,6q-2.900,2 -5.800,0z" fill="#d8d8d8" stroke="#222" stroke-width="0.6"/>
<path d="M442.800,81q3,2.600 6,0v1.200q-3,1.800 -6,0z" fill="#000"/>
<path d="M442.600,78h6.400" stroke="#888" stroke-width="0.7"/>
<circle cx="445.700" cy="69.900" r="6.700" fill="url(#gBulb)" stroke="#555" stroke-width="0.5"/>
<path d="M440,66.500a6.700,6.700 0 0 1 11.400,0" fill="none" stroke="#222" stroke-width="0.7"/>
<!-- fancy -->
<path d="M470,62.400L478.800,61L482.400,64.600L481.900,67.700L473.500,82.700L467.300,81.400L473.500,66.400z" fill="#f27272"/>
<path d="M473.500,66.400L478.800,61L482.400,64.600" fill="#e85c5c" stroke="#c03c3c" stroke-width="0.5"/>
<g fill="none" stroke="#8a5a3c" stroke-width="0.8"><path d="M467.300,64.500L470,62.400L478.800,61L485,63.300L482.400,64.600L473.500,66.400z M467.300,64.500V81.400L473.500,82.700L482.400,81.800L485,79.600V63.300 M473.500,66.400V82.700M482.400,64.600V81.800"/></g>
<!-- select (checked) -->
<rect x="504.500" y="57.500" width="30" height="29" rx="3" fill="#fff" stroke="#7b9ebf"/>
<g fill="none" stroke="#6fb4e4" stroke-width="0.9"><circle cx="518" cy="71.100" r="6.700"/><ellipse cx="518" cy="71.100" rx="2.600" ry="6.700"/><path d="M510,71.100h15M511.500,74.500q6.500,2.500 13,0"/></g>
<path d="M519.700,65.300V77.300L522.100,75.200L524.300,80.800L526.100,80L523.900,74.600L527,74.300z" fill="#2a2a2a" stroke="#e8e8e8" stroke-width="0.7"/>
<!-- red triangle + cursor -->
<path d="M539.300,65.200L556.500,61.300L548.600,76z" fill="#f27272" stroke="#553030" stroke-width="0.6"/>
<path d="M552.300,65v12.500l2.800,-2.800l2.400,5.800l2.100,-0.900l-2.400,-5.600h4z" fill="#fff" stroke="#666" stroke-width="0.7"/>
<!-- red X -->
<path d="M573.200,67.700L590.400,64.700L582,79z" fill="#f27272" stroke="#553030" stroke-width="0.6"/>
<path d="M574.400,62.500L588.400,79.500M588.400,62.500L574.400,79.500" stroke="#ff0000" stroke-width="1.8"/>

</svg>

<div id="bl"></div><div id="br"></div><div id="bb"></div>
</div>
</body></html>
